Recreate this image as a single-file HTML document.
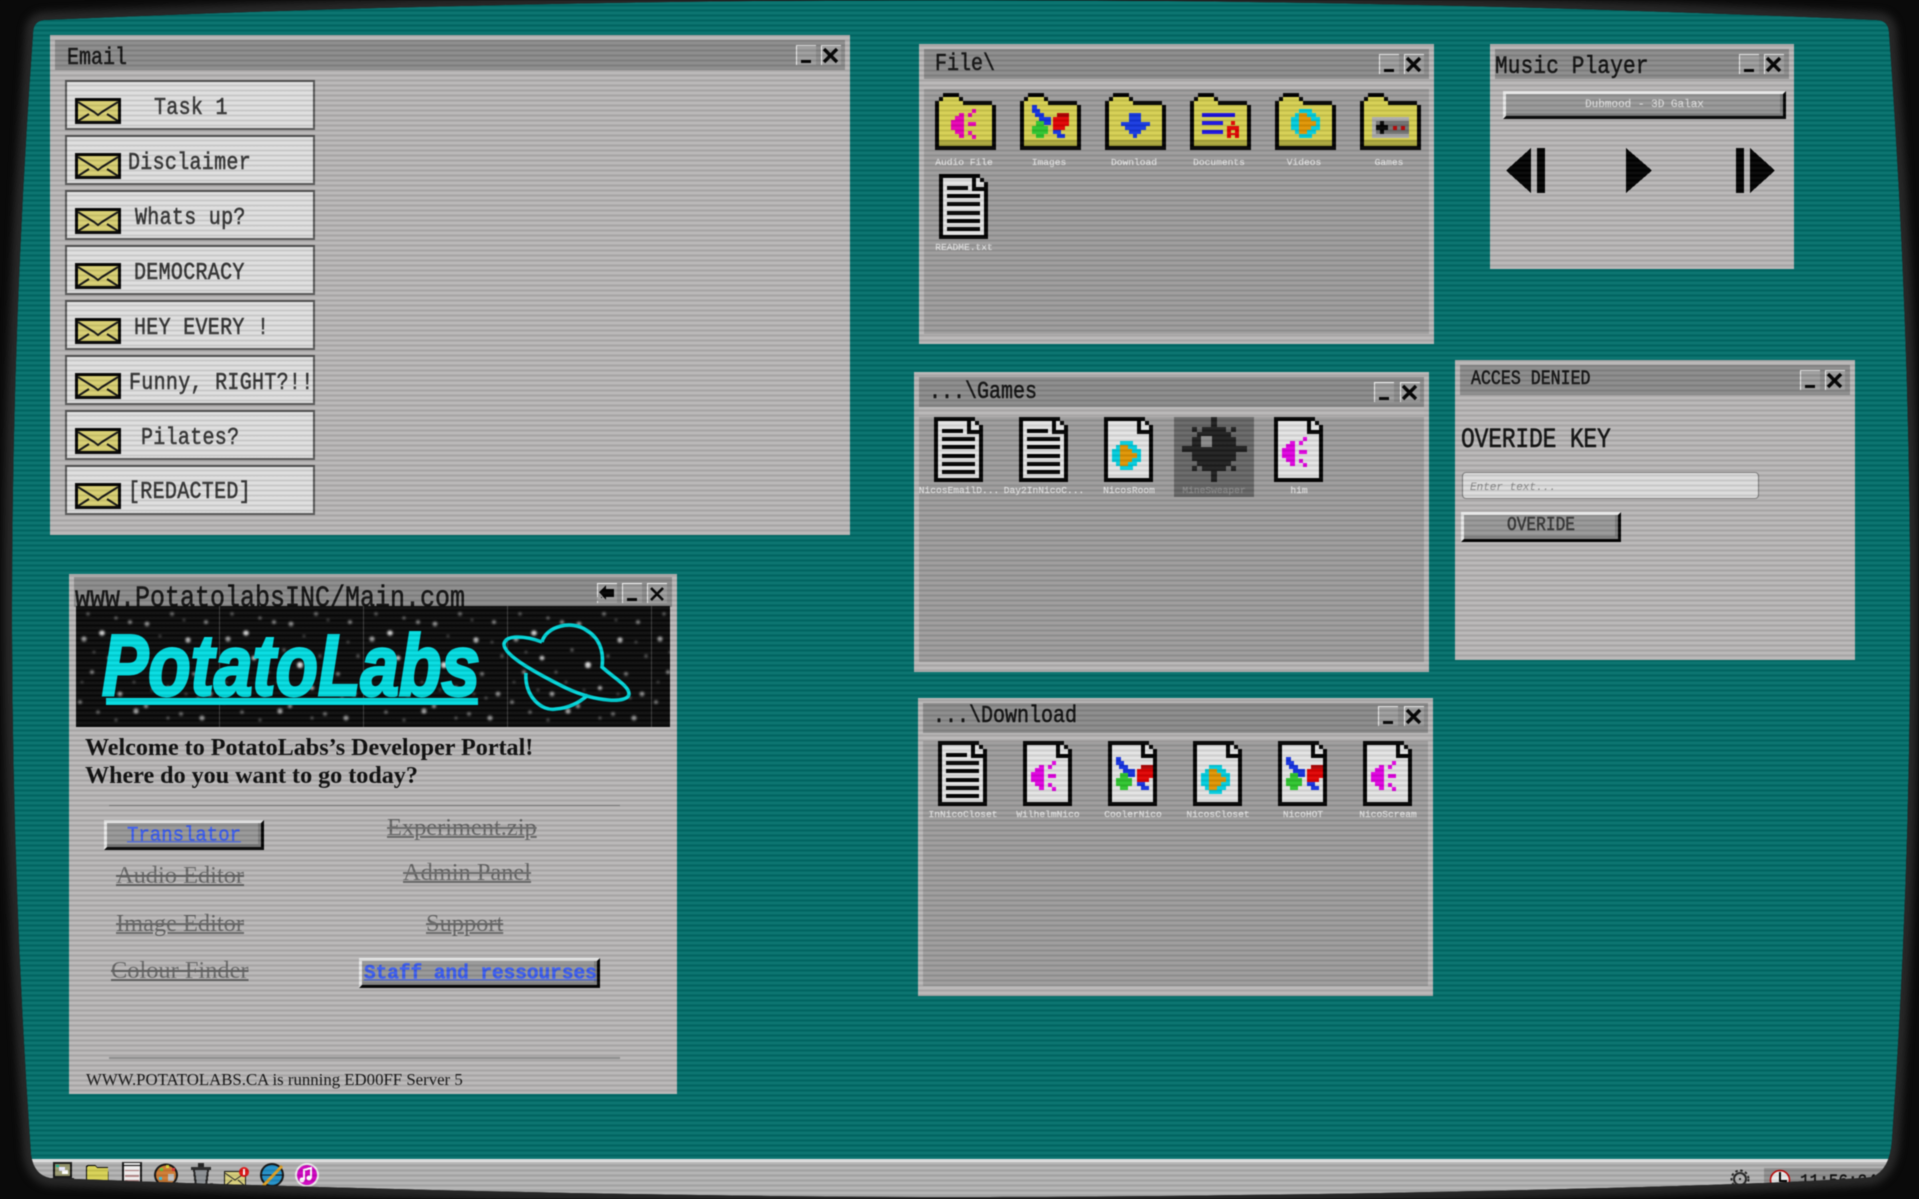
<!DOCTYPE html>
<html lang="en">
<head>
<meta charset="utf-8">
<title>PotatoLabs Desktop</title>
<style>
html,body{margin:0;padding:0;background:#0a0a0a;width:1919px;height:1199px;overflow:hidden}
#root{position:absolute;left:0;top:0;width:1919px;height:1199px;overflow:hidden;background:#006e6a;filter:blur(.45px)}
#root div{position:absolute;box-sizing:border-box}
.win{background:#b8b6b6}
.bar{background:#8a8a8a}
.pan{background:#9c9b9b}
.mn,.cl{width:20px;height:20px;background:#9c9c9c;border-left:1px solid #f2f2f2;border-top:1px solid #f2f2f2}
.mn:after{content:"";position:absolute;left:4px;top:14px;width:10px;height:3px;background:#000}
.m{font-family:"Liberation Mono",monospace;white-space:pre;line-height:24px;height:24px;transform:scaleY(1.2);transform-origin:0 50%;-webkit-text-stroke:.45px currentColor}
.t{font-size:20px;color:#111}
.i{font-size:20px;letter-spacing:.3px;color:#333}
.l{font-family:"Liberation Mono",monospace;font-size:9.6px;line-height:12px;height:12px;width:84px;text-align:center;color:#e2e2e2;white-space:pre;-webkit-text-stroke:.2px currentColor}
.it{background:#dedede;border:2px solid #555;left:65px;width:250px;height:50px}
.s{font-family:"Liberation Serif",serif;white-space:pre;line-height:28px;height:28px}
.x{font-size:24.4px;color:#666;text-decoration:line-through underline;text-decoration-thickness:2px}
.bev{background:#979797;border-style:solid;border-width:3px;border-color:#e8e8e8 #000 #000 #e8e8e8;box-shadow:inset -3px -3px 0 #7d7d7d}
a{color:inherit}
</style>
</head>
<body>
<div id="root">

<!-- Email -->
<div class="win" style="left:50px;top:35px;width:800px;height:500px"></div>
<div class="bar" style="left:55px;top:40px;width:790px;height:30px"></div>
<div class="m t" style="left:67px;top:47px">Email</div>
<div class="mn" style="left:796px;top:45px"></div><div class="cl" style="left:821px;top:45px"></div>
<div class="it" style="top:80px"></div>
<div class="it" style="top:135px"></div>
<div class="it" style="top:190px"></div>
<div class="it" style="top:245px"></div>
<div class="it" style="top:300px"></div>
<div class="it" style="top:355px"></div>
<div class="it" style="top:410px"></div>
<div class="it" style="top:465px"></div>
<div class="m i" style="left:154px;top:97px">Task 1</div>
<div class="m i" style="left:128px;top:152px">Disclaimer</div>
<div class="m i" style="left:135px;top:207px">Whats up?</div>
<div class="m i" style="left:134px;top:262px">DEMOCRACY</div>
<div class="m i" style="left:134px;top:317px">HEY EVERY !</div>
<div class="m i" style="left:129px;top:372px">Funny, RIGHT?!!</div>
<div class="m i" style="left:141px;top:427px">Pilates?</div>
<div class="m i" style="left:128px;top:481px">[REDACTED]</div>

<!-- File -->
<div class="win" style="left:919px;top:44px;width:515px;height:300px"></div>
<div class="bar" style="left:924px;top:49px;width:505px;height:30px"></div>
<div class="pan" style="left:924px;top:89px;width:505px;height:245px"></div>
<div class="m t" style="left:935px;top:53px">File\</div>
<div class="mn" style="left:1379px;top:54px"></div><div class="cl" style="left:1404px;top:54px"></div>
<div class="l" style="left:922px;top:157px">Audio File</div>
<div class="l" style="left:1007px;top:157px">Images</div>
<div class="l" style="left:1092px;top:157px">Download</div>
<div class="l" style="left:1177px;top:157px">Documents</div>
<div class="l" style="left:1262px;top:157px">Videos</div>
<div class="l" style="left:1347px;top:157px">Games</div>
<div class="l" style="left:922px;top:242px">README.txt</div>

<!-- Music -->
<div class="win" style="left:1490px;top:44px;width:304px;height:225px"></div>
<div class="bar" style="left:1495px;top:49px;width:294px;height:30px"></div>
<div class="m" style="left:1495px;top:56px;font-size:21px;letter-spacing:.2px;color:#111">Music Player</div>
<div class="mn" style="left:1739px;top:54px"></div><div class="cl" style="left:1764px;top:54px"></div>
<div class="bev" style="left:1503px;top:91px;width:283px;height:28px"></div>
<div class="l" style="left:1503px;top:98px;width:283px;font-size:11px;line-height:14px;height:14px;color:#dedede">Dubmood - 3D Galax</div>

<!-- Games -->
<div class="win" style="left:914px;top:372px;width:515px;height:300px"></div>
<div class="bar" style="left:919px;top:377px;width:505px;height:30px"></div>
<div class="pan" style="left:919px;top:417px;width:505px;height:245px"></div>
<div class="m t" style="left:929px;top:381px">...\Games</div>
<div class="mn" style="left:1374px;top:382px"></div><div class="cl" style="left:1400px;top:382px"></div>
<div style="left:1174px;top:417px;width:80px;height:80px;background:#666"></div>
<div class="l" style="left:917px;top:485px">NicosEmailD...</div>
<div class="l" style="left:1002px;top:485px">Day2InNicoC...</div>
<div class="l" style="left:1087px;top:485px">NicosRoom</div>
<div class="l" style="left:1172px;top:485px;color:#8a8a8a">MineSweaper</div>
<div class="l" style="left:1257px;top:485px">him</div>

<!-- Denied -->
<div class="win" style="left:1455px;top:360px;width:400px;height:300px"></div>
<div class="bar" style="left:1460px;top:365px;width:390px;height:30px"></div>
<div class="m" style="left:1471px;top:367px;font-size:16.6px;color:#111">ACCES DENIED</div>
<div class="mn" style="left:1800px;top:370px"></div><div class="cl" style="left:1825px;top:370px"></div>
<div class="m" style="left:1461px;top:428px;font-size:23px;letter-spacing:-.2px;color:#111">OVERIDE KEY</div>
<div style="left:1462px;top:472px;width:297px;height:27px;background:#dcdcdc;border:1px solid #777;border-radius:4px"></div>
<div class="m" style="left:1470px;top:476px;font-size:11px;font-style:italic;color:#888;transform:none;-webkit-text-stroke:0">Enter text...</div>
<div class="bev" style="left:1461px;top:512px;width:160px;height:30px"></div>
<div class="m" style="left:1461px;top:513px;width:160px;text-align:center;font-size:16.2px;color:#333">OVERIDE</div>

<!-- Download -->
<div class="win" style="left:918px;top:698px;width:515px;height:298px"></div>
<div class="bar" style="left:923px;top:703px;width:505px;height:30px"></div>
<div class="pan" style="left:923px;top:741px;width:505px;height:245px"></div>
<div class="m t" style="left:933px;top:705px">...\Download</div>
<div class="mn" style="left:1378px;top:706px"></div><div class="cl" style="left:1404px;top:706px"></div>
<div class="l" style="left:921px;top:809px">InNicoCloset</div>
<div class="l" style="left:1006px;top:809px">WilhelmNico</div>
<div class="l" style="left:1091px;top:809px">CoolerNico</div>
<div class="l" style="left:1176px;top:809px">NicosCloset</div>
<div class="l" style="left:1261px;top:809px">NicoHOT</div>
<div class="l" style="left:1346px;top:809px">NicoScream</div>

<!-- Potato -->
<div class="win" style="left:69px;top:574px;width:608px;height:520px"></div>
<div class="bar" style="left:74px;top:577px;width:598px;height:30px"></div>
<div class="m" style="left:75px;top:587px;font-size:25px;color:#111">www.PotatolabsINC/Main.com</div>
<div class="mn" style="left:622px;top:583px"></div><div class="cl" style="left:647px;top:583px"></div>
<div class="mn" style="left:597px;top:583px"></div>
<div style="left:597px;top:597px;width:20px;height:4px;background:#9c9c9c"></div>
<div class="s" style="left:85px;top:734px;font-size:24.1px;font-weight:bold;color:#0c0c0c">Welcome to PotatoLabs’s Developer Portal!</div>
<div class="s" style="left:85px;top:762px;font-size:24.1px;font-weight:bold;color:#0c0c0c">Where do you want to go today?</div>
<div style="left:109px;top:805px;width:511px;height:1px;background:#888"></div>
<div class="bev" style="left:104px;top:820px;width:160px;height:30px"></div>
<div class="m" style="left:104px;top:823px;width:160px;text-align:center;font-size:19px;color:#3a5cf0;transform:scaleY(1.05);text-decoration:underline">Translator</div>
<div class="s x" style="left:387px;top:814px">Experiment.zip</div>
<div class="s x" style="left:116px;top:862px">Audio Editor</div>
<div class="s x" style="left:403px;top:859px">Admin Panel</div>
<div class="s x" style="left:116px;top:910px">Image Editor</div>
<div class="s x" style="left:426px;top:910px">Support</div>
<div class="s x" style="left:111px;top:957px">Colour Finder</div>
<div class="bev" style="left:359px;top:958px;width:241px;height:30px"></div>
<div class="m" style="left:364px;top:961px;font-size:19.4px;font-weight:bold;color:#3a5cf0;transform:scaleY(1.05);text-decoration:underline">Staff and ressourses</div>
<div style="left:109px;top:1057px;width:511px;height:2px;background:#888"></div>
<div class="s" style="left:86px;top:1066px;font-size:16.8px;color:#111">WWW.POTATOLABS.CA is running ED00FF Server 5</div>

<!-- Taskbar -->
<div style="left:0;top:1159px;width:1919px;height:40px;background:#b2b2b2"></div>
<div style="left:0;top:1159px;width:1919px;height:3px;background:#f0f0f0"></div>
<div style="left:1764px;top:1168px;width:155px;height:31px;background:#8f8f8f"></div>
<div class="m" style="left:1800px;top:1170px;font-size:16px;color:#111;transform:scaleY(1.15)">11:56:24 PM</div>

<svg style="position:absolute;left:0;top:0" width="1919" height="1199" viewBox="0 0 1919 1199" shape-rendering="crispEdges">
<defs>
<g id="fo"><polygon fill="#000" points="8,0 24,0 24,4 28,4 28,8 57,8 57,12 61,12 61,57 0,57 0,8 4,8 4,4 8,4"/><polygon fill="#d6d04f" points="8,4 24,4 24,8 28,8 28,12 57,12 57,53 4,53 4,8 8,8"/><rect x="4" y="47" width="53" height="6" fill="#a9a63a"/></g>
<g id="fi"><polygon fill="#000" points="0,0 41,0 41,4 45,4 45,8 49,8 49,65 0,65"/><polygon fill="#e4e4e4" points="4,4 41,4 41,8 45,8 45,61 4,61"/><rect x="33" y="4" width="4" height="13" fill="#000"/><rect x="33" y="13" width="12" height="4" fill="#000"/></g>
<g id="tx"><rect x="8" y="12" width="21" height="4"/><rect x="8" y="20" width="33" height="4"/><rect x="8" y="28" width="33" height="4"/><rect x="8" y="37" width="33" height="4"/><rect x="8" y="45" width="33" height="4"/><rect x="8" y="53" width="33" height="4"/></g>
<g id="au"><rect x="16" y="27" width="4" height="10"/><rect x="20" y="23" width="4" height="18"/><rect x="24" y="20" width="5" height="25"/><rect x="37" y="16" width="4" height="4"/><rect x="33" y="20" width="4" height="4"/><rect x="33" y="29" width="8" height="4"/><rect x="33" y="38" width="4" height="4"/><rect x="37" y="42" width="4" height="4"/></g>
<g id="im"><g fill="#1230e0"><rect x="12" y="12" width="5" height="8"/><rect x="15" y="16" width="5" height="8"/><rect x="19" y="20" width="5" height="8"/><rect x="23" y="24" width="8" height="8"/><rect x="33" y="37" width="8" height="4"/><rect x="37" y="41" width="8" height="4"/></g><rect x="37" y="20" width="12" height="4" fill="#b00000"/><rect x="33" y="24" width="16" height="9" fill="#e00000"/><rect x="33" y="33" width="12" height="4" fill="#e00000"/><rect x="16" y="28" width="8" height="17" fill="#2cc52c"/><rect x="12" y="33" width="16" height="8" fill="#2cc52c"/></g>
<g id="vi"><g fill="#00cede"><rect x="24" y="16" width="13" height="29"/><rect x="20" y="20" width="21" height="21"/><rect x="16" y="24" width="29" height="13"/></g><g fill="#e09400"><rect x="24" y="20" width="8" height="21"/><rect x="32" y="24" width="4" height="13"/><rect x="36" y="28" width="5" height="5"/></g></g>
<pattern id="st" width="144" height="121" patternUnits="userSpaceOnUse">
<rect width="144" height="121" fill="#080808"/><rect x="143" width="1" height="121" fill="#3c3c3c"/>
<g fill="#fff" style="filter:blur(1.1px)" shape-rendering="auto">
<circle cx="8" cy="33" r="2.6" opacity=".6"/><circle cx="26" cy="27" r="2.8" opacity=".8"/><circle cx="34" cy="52" r="2.4" opacity=".75"/><circle cx="54" cy="16" r="2" opacity=".5"/><circle cx="71" cy="18" r="2.4" opacity=".55"/><circle cx="80" cy="59" r="3" opacity=".9"/><circle cx="96" cy="8" r="2" opacity=".4"/><circle cx="112" cy="34" r="2.6" opacity=".75"/><circle cx="130" cy="16" r="2" opacity=".5"/><circle cx="16" cy="66" r="2" opacity=".5"/><circle cx="4" cy="96" r="2" opacity=".45"/><circle cx="22" cy="106" r="1.8" opacity=".4"/><circle cx="44" cy="88" r="2.4" opacity=".6"/><circle cx="60" cy="105" r="2.6" opacity=".65"/><circle cx="70" cy="100" r="2.2" opacity=".55"/><circle cx="92" cy="82" r="2.2" opacity=".65"/><circle cx="118" cy="68" r="2" opacity=".45"/><circle cx="134" cy="88" r="2.4" opacity=".55"/><circle cx="126" cy="112" r="2.6" opacity=".55"/><circle cx="105" cy="108" r="2" opacity=".4"/><circle cx="40" cy="12" r="1.6" opacity=".4"/><circle cx="64" cy="44" r="1.6" opacity=".4"/><circle cx="100" cy="50" r="1.6" opacity=".35"/><circle cx="12" cy="8" r="1.7" opacity=".35"/><circle cx="138" cy="50" r="1.7" opacity=".35"/><circle cx="48" cy="66" r="1.5" opacity=".35"/><circle cx="84" cy="30" r="1.4" opacity=".3"/><circle cx="122" cy="92" r="1.5" opacity=".3"/><circle cx="30" cy="84" r="1.4" opacity=".3"/><circle cx="108" cy="14" r="1.4" opacity=".3"/><circle cx="18" cy="46" r="1.4" opacity=".3"/><circle cx="58" cy="76" r="1.4" opacity=".3"/><circle cx="76" cy="84" r="1.3" opacity=".3"/><circle cx="128" cy="36" r="1.4" opacity=".3"/><circle cx="92" cy="112" r="1.5" opacity=".35"/><circle cx="40" cy="114" r="1.5" opacity=".35"/><circle cx="110" cy="88" r="1.3" opacity=".3"/><circle cx="6" cy="76" r="1.3" opacity=".3"/>
</g></pattern>
</defs>

<!-- envelopes -->
<g id="envs">
<g id="e0"><rect x="75" y="98" width="46" height="26" fill="#000"/><rect x="78" y="101" width="40" height="20" fill="#d8cf70"/><path d="M78 102l16 10 4 3 4-3 16-10M78 121l11-7M118 121l-11-7" fill="none" stroke="#111" stroke-width="2" shape-rendering="auto"/></g>
<use href="#e0" y="55"/><use href="#e0" y="110"/><use href="#e0" y="165"/><use href="#e0" y="220"/><use href="#e0" y="275"/><use href="#e0" y="330"/><use href="#e0" y="385"/>
</g>

<!-- File window icons -->
<use href="#fo" x="935" y="93"/><use href="#au" x="935" y="93" fill="#e800b4"/>
<use href="#fo" x="1020" y="93"/><use href="#im" x="1020" y="93"/>
<use href="#fo" x="1105" y="93"/>
<g fill="#1437e0" transform="translate(1105 93)"><rect x="24" y="20" width="12" height="13"/><rect x="16" y="29" width="29" height="4"/><rect x="20" y="33" width="21" height="4"/><rect x="24" y="37" width="12" height="4"/><rect x="28" y="41" width="4" height="4"/></g>
<use href="#fo" x="1190" y="93"/>
<g transform="translate(1190 93)"><g fill="#1a10e0"><rect x="12" y="20" width="33" height="4"/><rect x="12" y="28" width="21" height="4"/><rect x="12" y="37" width="21" height="4"/></g><g fill="#e00000"><rect x="41" y="28" width="4" height="4"/><rect x="37" y="33" width="12" height="12"/></g><rect x="41" y="37" width="4" height="3" fill="#d6d04f"/><rect x="41" y="42" width="4" height="3" fill="#d6d04f"/></g>
<use href="#fo" x="1275" y="93"/><use href="#vi" x="1275" y="93"/>
<use href="#fo" x="1360" y="93"/>
<g transform="translate(1360 93)"><rect x="12" y="24" width="37" height="21" fill="#ababab"/><rect x="16" y="28" width="33" height="13" fill="#6f6f6f"/><rect x="16" y="32" width="12" height="5" fill="#000"/><rect x="20" y="28" width="4" height="13" fill="#000"/><rect x="33" y="33" width="4" height="4" fill="#b00000"/><rect x="41" y="33" width="4" height="4" fill="#b00000"/></g>
<use href="#fi" x="939" y="174"/><use href="#tx" x="939" y="174" fill="#000"/>

<!-- Games icons -->
<use href="#fi" x="934" y="417"/><use href="#tx" x="934" y="417" fill="#000"/>
<use href="#fi" x="1019" y="417"/><use href="#tx" x="1019" y="417" fill="#000"/>
<use href="#fi" x="1104" y="417"/><use href="#vi" x="1096" y="425"/>
<g transform="translate(1214 449)" fill="#1d1d1d"><rect x="-3" y="-32" width="6" height="65"/><rect x="-32" y="-3" width="65" height="6"/><rect x="-22" y="-12" width="44" height="24"/><rect x="-17" y="-17" width="34" height="34"/><rect x="-12" y="-22" width="24" height="44"/><rect x="-22" y="-22" width="5" height="5"/><rect x="17" y="-22" width="5" height="5"/><rect x="-22" y="17" width="5" height="5"/><rect x="17" y="17" width="5" height="5"/><rect x="-13" y="-13" width="11" height="11" fill="#8a8a8a"/></g>
<use href="#fi" x="1274" y="417"/><use href="#au" x="1266" y="421" fill="#e000e0"/>

<!-- Download icons -->
<use href="#fi" x="938" y="741"/><use href="#tx" x="938" y="741" fill="#000"/>
<use href="#fi" x="1023" y="741"/><use href="#au" x="1015" y="745" fill="#e000e0"/>
<use href="#fi" x="1108" y="741"/><use href="#im" x="1104" y="745"/>
<use href="#fi" x="1193" y="741"/><use href="#vi" x="1185" y="749"/>
<use href="#fi" x="1278" y="741"/><use href="#im" x="1274" y="745"/>
<use href="#fi" x="1363" y="741"/><use href="#au" x="1355" y="745" fill="#e000e0"/>

<!-- Player controls -->
<g fill="#000">
<polygon points="1531,148 1531,193 1506,170.5"/><rect x="1537" y="148" width="8" height="45"/>
<polygon points="1626,148 1626,193 1652,170.5"/>
<rect x="1736" y="148" width="8" height="45"/><polygon points="1750,148 1750,193 1775,170.5"/>
</g>

<!-- Close crosses + arrow -->
<g stroke="#000" stroke-width="3.4" fill="none" shape-rendering="auto">
<path id="xx" d="M824 49l13 13M837 49l-13 13"/>
<use href="#xx" x="583" y="9"/><use href="#xx" x="943" y="9"/><use href="#xx" x="579" y="337"/>
<use href="#xx" x="583" y="661"/><use href="#xx" x="1004" y="325"/>
<path stroke-width="2.6" d="M651 588l12 12M663 588l-12 12"/>
</g>
<polygon fill="#000" points="599,592 606,585 606,589 614,589 614,597 606,597 606,600"/>
<rect x="601" y="597" width="1" height="1" fill="#000"/>

<!-- banner -->
<g transform="translate(76 606)">
<rect width="594" height="121" fill="url(#st)"/>
<text x="26" y="89" font-family="Liberation Sans" font-weight="bold" font-style="italic" font-size="86" fill="#00dde2" stroke="#00dde2" stroke-width="3" textLength="378" lengthAdjust="spacingAndGlyphs" shape-rendering="auto">PotatoLabs</text>
<rect x="30" y="92" width="372" height="7" fill="#00dde2"/>
<path shape-rendering="auto" fill="none" stroke="#00d8dc" stroke-width="3.6" d="M466,36 C450,30 430,28 428,38 C428,48 450,62 490,82 C520,96 552,98 553,88 C553,80 538,72 526,61 C528,46 524,32 510,24 C496,14 470,20 466,36 M450,67 C448,90 466,106 480,103 C494,102 504,96 512,89"/>
</g>

<!-- taskbar icons -->
<g>
<rect x="53" y="1162" width="19" height="16" fill="#111"/><rect x="55" y="1164" width="15" height="12" fill="#9a9a70"/><rect x="56" y="1165" width="3" height="2" fill="#12c0a0"/><rect x="59" y="1167" width="6" height="4" fill="#e8e8ff"/><rect x="62" y="1170" width="6" height="4" fill="#fff"/><rect x="50" y="1178" width="24" height="5" fill="#1a1a1a"/>
<polygon fill="#000" points="88,1165 95,1165 97,1167 108,1167 109,1184 86,1184 86,1166"/><polygon fill="#d8d252" points="88,1166 95,1166 97,1168 108,1168 108,1183 87,1183 87,1167"/>
<rect x="122" y="1162" width="20" height="24" fill="#111"/><rect x="124" y="1166" width="16" height="19" fill="#f0eded"/><g fill="#c09090"><rect x="125" y="1170" width="14" height="1"/><rect x="125" y="1175" width="14" height="2"/><rect x="125" y="1180" width="14" height="2"/></g><rect x="124" y="1163" width="16" height="2" fill="#eee"/><rect x="141" y="1183" width="3" height="4" fill="#666"/>
<ellipse cx="166" cy="1175" rx="12" ry="11.5" fill="#111" shape-rendering="auto"/><ellipse cx="166" cy="1175" rx="10" ry="9.5" fill="#d07a30" shape-rendering="auto"/><rect x="160" y="1168" width="3" height="3" fill="#6c3"/><rect x="166" y="1165" width="3" height="3" fill="#dd3"/><rect x="172" y="1168" width="3" height="3" fill="#d33"/><rect x="159" y="1177" width="3" height="3" fill="#3bd"/><rect x="160" y="1182" width="3" height="3" fill="#a2c"/><rect x="168" y="1174" width="6" height="7" fill="#c0c0c0"/><rect x="175" y="1182" width="3" height="4" fill="#666"/>
<rect x="191" y="1167" width="20" height="3" fill="#222"/><rect x="198" y="1163" width="6" height="4" fill="#222"/><polygon fill="#222" points="193,1170 209,1170 207,1187 195,1187"/><polygon fill="#8b9094" points="195,1170 207,1170 205,1185 197,1185"/><rect x="210" y="1183" width="3" height="4" fill="#555"/>
<rect x="224" y="1171" width="22" height="16" fill="#111"/><rect x="225" y="1172" width="20" height="14" fill="#d9d07a"/><path d="M225 1173l10 7 10-7M225 1186l7-6M245 1186l-7-6" fill="none" stroke="#222" stroke-width="1" shape-rendering="auto"/><circle cx="244" cy="1172" r="5" fill="#d11" shape-rendering="auto"/><rect x="243" y="1169" width="2" height="6" fill="#fff"/>
<circle cx="272" cy="1175" r="12" fill="#111" shape-rendering="auto"/><circle cx="272" cy="1175" r="10" fill="#1f8fc8" shape-rendering="auto"/><path d="M262 1175h20" stroke="#123" stroke-width="1"/><path d="M263 1186l19-20" stroke="#e0a020" stroke-width="3" shape-rendering="auto"/>
<circle cx="307" cy="1175" r="12" fill="#eee" shape-rendering="auto"/><circle cx="307" cy="1175" r="10" fill="#d000c0" shape-rendering="auto"/><path d="M304 1180v-10l7-2v10" stroke="#fff" stroke-width="2" fill="none"/><circle cx="302" cy="1180" r="2.5" fill="#fff" shape-rendering="auto"/><circle cx="309" cy="1178" r="2.5" fill="#fff" shape-rendering="auto"/>
<circle cx="1740" cy="1179" r="6" fill="none" stroke="#222" stroke-width="2" shape-rendering="auto"/><circle cx="1740" cy="1179" r="8.5" fill="none" stroke="#222" stroke-width="2" stroke-dasharray="2.5 2.5" shape-rendering="auto"/><rect x="1739" y="1178" width="2" height="2" fill="#222"/>
<circle cx="1780" cy="1180" r="9.5" fill="#eaeaea" stroke="#b00" stroke-width="1.5" shape-rendering="auto"/><rect x="1779" y="1172" width="2" height="9" fill="#000"/><rect x="1779" y="1180" width="8" height="2" fill="#000"/>
</g>
</svg>

<!-- scanlines -->
<div style="left:0;top:0;width:1919px;height:1199px;background:repeating-linear-gradient(0deg,rgba(255,255,255,.05) 0,rgba(255,255,255,.05) 2px,rgba(0,0,0,.1) 3px,rgba(0,0,0,.1) 4px,rgba(255,255,255,.05) 5px)"></div>

<!-- CRT bezel -->
<svg style="position:absolute;left:0;top:0" width="1919" height="1199" viewBox="0 0 1919 1199">
<defs>
<clipPath id="out"><path clip-rule="evenodd" d="M-10-10H1930V1210H-10Z M44,20 Q960,-20 1876,20 Q1888,20 1889,32 Q1930,600 1892,1140 Q1890,1170 1872,1177 C1780,1186 1300,1197 960,1197 C600,1197 200,1184 50,1178 Q34,1175 31,1155 Q-8,600 33,34 Q33,21 44,20Z"/></clipPath>
</defs>
<path fill="#0a0a0a" fill-rule="evenodd" d="M-10-10H1930V1210H-10Z M44,20 Q960,-20 1876,20 Q1888,20 1889,32 Q1930,600 1892,1140 Q1890,1170 1872,1177 C1780,1186 1300,1197 960,1197 C600,1197 200,1184 50,1178 Q34,1175 31,1155 Q-8,600 33,34 Q33,21 44,20Z"/>
<g clip-path="url(#out)"><path fill="none" stroke="#282828" stroke-width="16" style="filter:blur(4px)" d="M44,20 Q960,-20 1876,20 Q1888,20 1889,32 Q1930,600 1892,1140 Q1890,1170 1872,1177 C1780,1186 1300,1197 960,1197 C600,1197 200,1184 50,1178 Q34,1175 31,1155 Q-8,600 33,34 Q33,21 44,20Z"/></g>
</svg>

</div>
</body>
</html>
